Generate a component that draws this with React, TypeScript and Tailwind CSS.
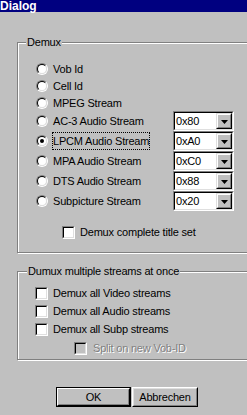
import React from "react";

function Radio({ checked = false }: { checked?: boolean }) {
  return (
    <span className="block w-[12px] h-[12px] shrink-0 rounded-full border border-t-[#808080] border-l-[#808080] border-r-white border-b-white">
      <span className="flex w-full h-full items-center justify-center rounded-full border border-t-black border-l-black border-r-[#dfdfdf] border-b-[#dfdfdf] bg-white">
        {checked && <span className="block w-[4px] h-[4px] rounded-full bg-black" />}
      </span>
    </span>
  );
}

function Check({ disabled = false }: { disabled?: boolean }) {
  return (
    <span className="block w-[13px] h-[13px] shrink-0 border border-t-[#808080] border-l-[#808080] border-r-white border-b-white">
      <span
        className={
          disabled
            ? "block w-full h-full border border-t-black border-l-black border-r-[#dfdfdf] border-b-[#dfdfdf] bg-[#c0c0c0]"
            : "block w-full h-full border border-t-black border-l-black border-r-[#dfdfdf] border-b-[#dfdfdf] bg-white"
        }
      />
    </span>
  );
}

function Combo({ value }: { value: string }) {
  return (
    <div className="w-[61px] h-[20px] shrink-0 border border-t-[#808080] border-l-[#808080] border-r-white border-b-white">
      <div className="flex h-full border border-t-black border-l-black border-r-[#dfdfdf] border-b-[#dfdfdf] bg-white">
        <span className="flex-1 pl-[1px] leading-[16px]">{value}</span>
        <span className="block w-[16px] h-[16px] border border-t-[#dfdfdf] border-l-[#dfdfdf] border-r-black border-b-black">
          <span className="flex w-full h-full items-center justify-center border border-t-white border-l-white border-r-[#808080] border-b-[#808080] bg-[#c0c0c0]">
            <svg width="7" height="4" viewBox="0 0 7 4" className="mt-[1px]">
              <polygon points="0,0 7,0 3.5,4" fill="black" />
            </svg>
          </span>
        </span>
      </div>
    </div>
  );
}

function RadioRow({
  label,
  checked = false,
  focused = false,
  combo,
  height,
}: {
  label: string;
  checked?: boolean;
  focused?: boolean;
  combo?: string;
  height: string;
}) {
  return (
    <div className={`flex items-center pl-[18px] ${height}`}>
      <div className="flex items-center gap-[4px] w-[137px]">
        <Radio checked={checked} />
        <span
          className={
            focused
              ? "h-[18px] leading-[16px] border border-dotted border-black whitespace-nowrap"
              : "h-[18px] leading-[16px] border border-transparent whitespace-nowrap"
          }
        >
          {label}
        </span>
      </div>
      {combo && <Combo value={combo} />}
    </div>
  );
}

export default function App() {
  return (
    <div className="relative w-[247px] h-[415px] overflow-hidden bg-[#c0c0c0] text-black text-[11px] tracking-[-0.2px] font-['Liberation_Sans',Arial,sans-serif]">
      {/* Title bar */}
      <div className="h-[12px] bg-[#000080] flex items-center">
        <span className="text-white font-bold text-[12px] leading-[12px] tracking-normal">Dialog</span>
      </div>

      {/* Demux group */}
      <div className="relative ml-[17px] mt-[30px] w-[240px] h-[211px] border border-[#808080] shadow-[inset_1px_1px_0_white,1px_1px_0_white] pt-[17px]">
        <span className="absolute top-[-7px] left-[8px] px-[1px] bg-[#c0c0c0] leading-[13px]">Demux</span>
        <RadioRow label="Vob Id" height="h-[17px]" />
        <RadioRow label="Cell Id" height="h-[17px]" />
        <RadioRow label="MPEG Stream" height="h-[17px]" />
        <RadioRow label="AC-3 Audio Stream" combo="0x80" height="h-[20px]" />
        <RadioRow label="LPCM Audio Stream" checked focused combo="0xA0" height="h-[20px]" />
        <RadioRow label="MPA Audio Stream" combo="0xC0" height="h-[20px]" />
        <RadioRow label="DTS Audio Stream" combo="0x88" height="h-[20px]" />
        <RadioRow label="Subpicture Stream" combo="0x20" height="h-[20px]" />
        <div className="flex items-center gap-[5px] pl-[44px] mt-[13px] h-[17px]">
          <Check />
          <span>Demux complete title set</span>
        </div>
      </div>

      {/* Multiple streams group */}
      <div className="relative ml-[17px] mt-[18px] w-[240px] h-[89px] border border-[#808080] shadow-[inset_1px_1px_0_white,1px_1px_0_white] pt-[12px]">
        <span className="absolute top-[-7px] left-[9px] px-[1px] bg-[#c0c0c0] leading-[13px] whitespace-nowrap">
          Dumux multiple streams at once
        </span>
        <div className="flex items-center gap-[5px] pl-[17px] h-[18px]">
          <Check />
          <span>Demux all Video streams</span>
        </div>
        <div className="flex items-center gap-[5px] pl-[17px] h-[18px]">
          <Check />
          <span>Demux all Audio streams</span>
        </div>
        <div className="flex items-center gap-[5px] pl-[17px] h-[18px]">
          <Check />
          <span>Demux all Subp streams</span>
        </div>
        <div className="flex items-center gap-[6px] pl-[56px] mt-[2px] h-[17px]">
          <Check disabled />
          <span className="text-[#808080] [text-shadow:1px_1px_0_white]">Split on new Vob-ID</span>
        </div>
      </div>

      {/* Buttons */}
      <div className="flex gap-[1px] pl-[56px] mt-[27px]">
        <button className="w-[75px] h-[20px] border border-black">
          <span className="flex w-full h-full border border-t-white border-l-white border-r-black border-b-black">
            <span className="flex w-full h-full items-center justify-center border border-t-[#c0c0c0] border-l-[#c0c0c0] border-r-[#808080] border-b-[#808080]">
              OK
            </span>
          </span>
        </button>
        <button className="w-[66px] h-[20px] border border-t-white border-l-white border-r-black border-b-black">
          <span className="flex w-full h-full items-center justify-center border border-t-[#dfdfdf] border-l-[#dfdfdf] border-r-[#808080] border-b-[#808080]">
            Abbrechen
          </span>
        </button>
      </div>
    </div>
  );
}
